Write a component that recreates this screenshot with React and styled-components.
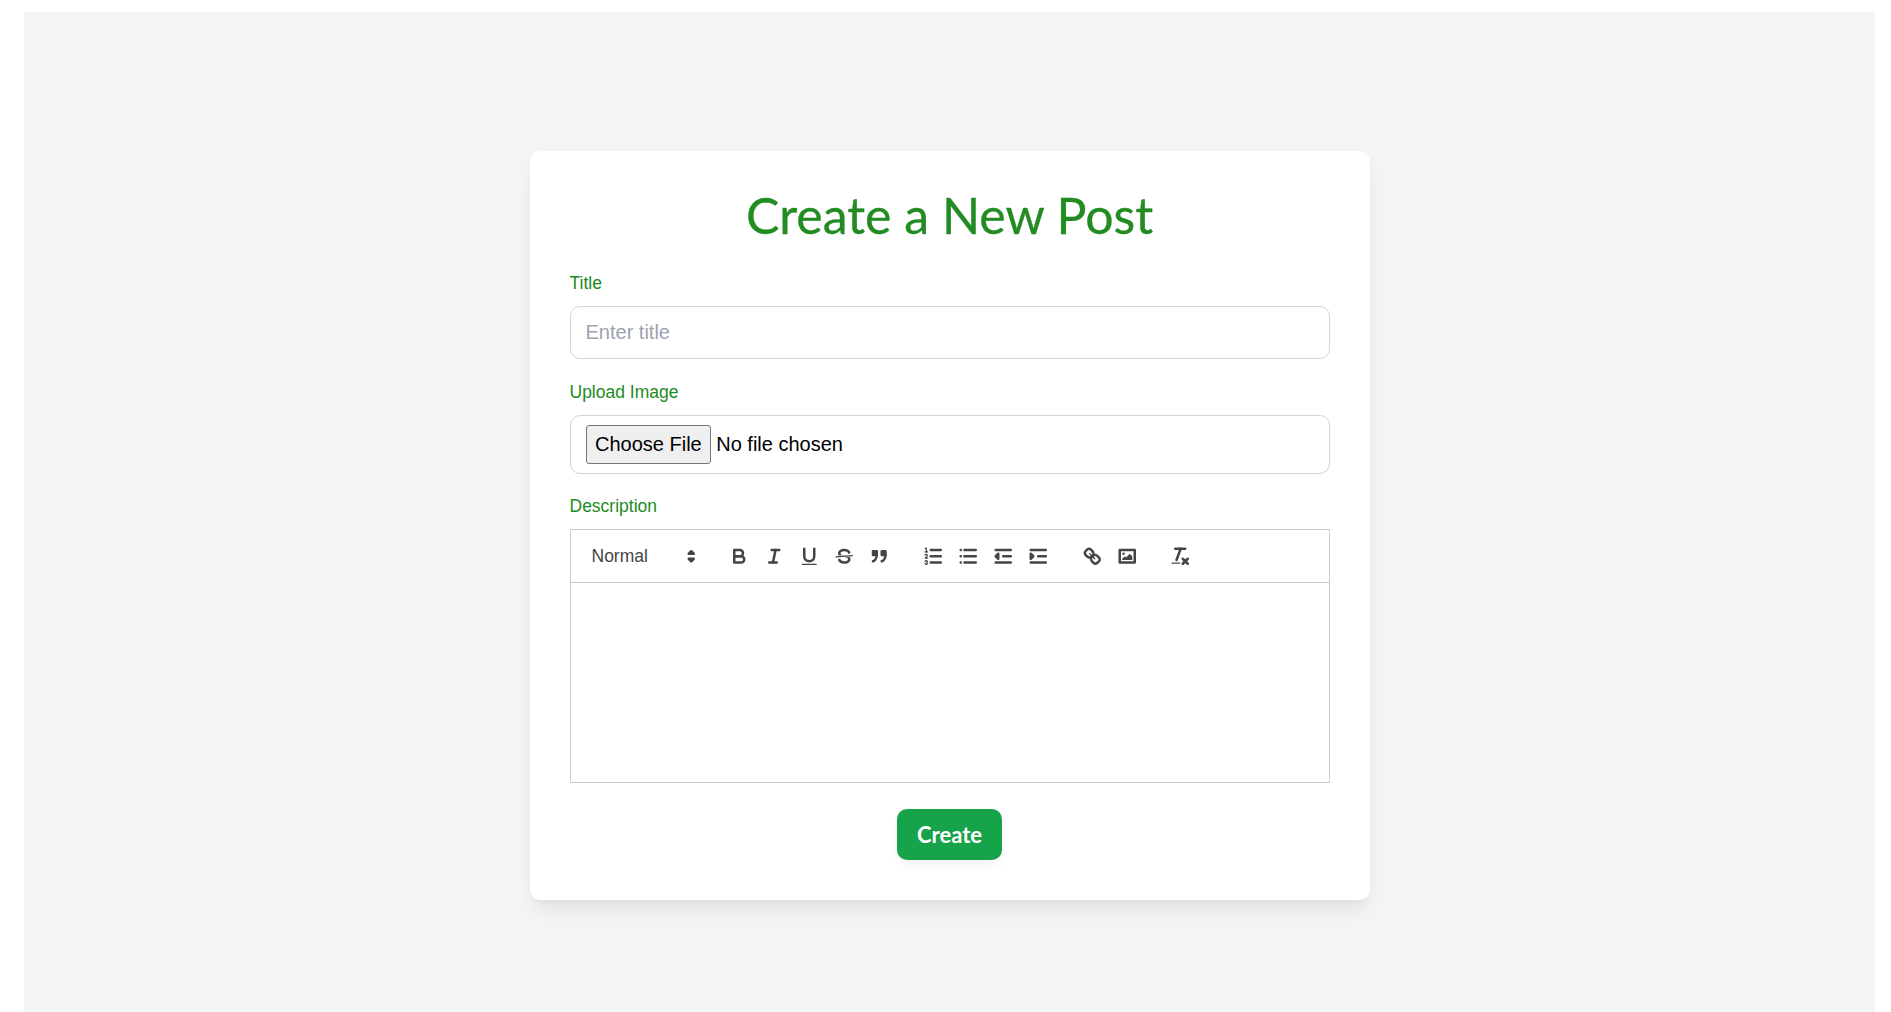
import React from 'react';
import styled, { createGlobalStyle } from 'styled-components';

const GlobalStyle = createGlobalStyle`
  html, body {
    margin: 0;
    background: #fff;
  }
  body {
    font-family: 'Liberation Sans', Arial, sans-serif;
  }
`;

const Page = styled.main`
  margin: 12px 16px 0 24px;
  min-height: 1000px;
  padding-top: 139px;
  box-sizing: border-box;
  background: #f3f4f6;
  display: flex;
  justify-content: center;
  align-items: flex-start;
`;

const Card = styled.form`
  width: 840px;
  box-sizing: border-box;
  padding: 40px;
  background: #fff;
  border-radius: 10px;
  box-shadow: 0 12px 19px -4px rgba(0, 0, 0, 0.08), 0 5px 8px -5px rgba(0, 0, 0, 0.06);
`;

const Heading = styled.h1`
  margin: 0 0 32px;
  text-align: center;
  font-family: Lato, sans-serif;
  font-size: 50px;
  line-height: 48px;
  font-weight: 400;
  color: #228b22;
  -webkit-text-stroke: 0.3px #228b22;
`;

const Field = styled.div`
  margin-bottom: 20.5px;
`;

const Label = styled.label`
  display: block;
  margin-bottom: 10px;
  font-size: 17.5px;
  line-height: 25px;
  color: #228b22;
`;

const TextInput = styled.input`
  display: block;
  width: 100%;
  height: 53px;
  box-sizing: border-box;
  padding: 0 15px;
  border: 1px solid #d1d5db;
  border-radius: 10px;
  outline: none;
  font-family: 'Liberation Sans', Arial, sans-serif;
  font-size: 20px;
  color: #111;

  &::placeholder {
    color: #9ca3af;
    opacity: 1;
  }
`;

const FileInput = styled(TextInput)`
  height: 59px;
  padding: 9px 15px;
  color: #000;

  &::file-selector-button {
    height: 39px;
    margin-right: 5px;
    padding: 0 8.5px;
    font: inherit;
    color: #000;
    background: #efefef;
    border: 1px solid #767676;
    border-radius: 3px;
  }
`;

const Editor = styled.div`
  border: 1px solid #ccc;
`;

const Toolbar = styled.div`
  display: flex;
  align-items: center;
  height: 53px;
  box-sizing: border-box;
  padding: 0 10px;
  border-bottom: 1px solid #ccc;
`;

const ToolGroup = styled.div`
  display: flex;
  margin-right: ${props => props.$gap || 18.75}px;
`;

const Picker = styled.div`
  display: flex;
  align-items: center;
  justify-content: space-between;
  width: 121.5px;
  height: 30px;
  padding-left: 11px;
  box-sizing: border-box;
  font-size: 17.5px;
  color: #444;
`;

const ToolButton = styled.button`
  width: 35px;
  height: 30px;
  padding: 4px 6px;
  border: none;
  background: none;
  display: flex;
  align-items: center;
  justify-content: center;
`;

const Glyph = styled.svg.attrs({ viewBox: '0 0 18 18' })`
  width: 22.5px;
  height: 22.5px;
  flex: none;

  .s {
    fill: none;
    stroke: #444;
    stroke-width: 2;
    stroke-linecap: round;
    stroke-linejoin: round;
  }
  .t {
    fill: none;
    stroke: #444;
    stroke-width: 1;
    stroke-linecap: round;
    stroke-linejoin: round;
  }
  .f {
    fill: #444;
  }
  .sf {
    fill: #444;
    stroke: #444;
    stroke-width: 2;
    stroke-linecap: round;
    stroke-linejoin: round;
  }
`;

const EditorBody = styled.div`
  height: 199px;
`;

const Actions = styled.div`
  display: flex;
  justify-content: center;
  margin-top: 26px;
`;

const SubmitButton = styled.button`
  width: 105px;
  height: 51px;
  border: none;
  border-radius: 10px;
  background: #16a34a;
  color: #fff;
  font-family: Lato, sans-serif;
  font-size: 22px;
  font-weight: 700;
  box-shadow: 0 6px 12px -2px rgba(0, 0, 0, 0.06);
`;

const icons = {
  bold: (
    <>
      <path className="s" d="M5,4H9.5A2.5,2.5,0,0,1,12,6.5v0A2.5,2.5,0,0,1,9.5,9H5A0,0,0,0,1,5,9V4A0,0,0,0,1,5,4Z" />
      <path className="s" d="M5,9h5.5A2.5,2.5,0,0,1,13,11.5v0A2.5,2.5,0,0,1,10.5,14H5a0,0,0,0,1,0,0V9A0,0,0,0,1,5,9Z" />
    </>
  ),
  italic: (
    <>
      <line className="s" x1="7" x2="13" y1="4" y2="4" />
      <line className="s" x1="5" x2="11" y1="14" y2="14" />
      <line className="s" x1="8" x2="10" y1="14" y2="4" />
    </>
  ),
  underline: (
    <>
      <path className="s" d="M5,3V9a4.012,4.012,0,0,0,4,4H9a4.012,4.012,0,0,0,4-4V3" />
      <rect className="f" height="1" rx="0.5" ry="0.5" width="12" x="3" y="15" />
    </>
  ),
  strike: (
    <>
      <line className="t" x1="15.5" x2="2.5" y1="8.5" y2="9.5" />
      <path className="f" d="M9.007,8C6.542,7.791,6,7.519,6,6.5,6,5.792,7.283,5,9,5c1.571,0,2.765.679,2.969,1.309a1,1,0,0,0,1.9-.617C13.356,4.106,11.354,3,9,3,6.2,3,4,4.538,4,6.5a3.2,3.2,0,0,0,.5,1.843Z" />
      <path className="f" d="M8.984,10C11.457,10.208,12,10.479,12,11.5c0,.708-1.283,1.5-3,1.5-1.571,0-2.765-.679-2.969-1.309a1,1,0,1,0-1.9.617C4.644,13.894,6.646,15,9,15c2.8,0,5-1.538,5-3.5a3.2,3.2,0,0,0-.5-1.843Z" />
    </>
  ),
  quote: (
    <>
      <rect className="sf" height="3" width="3" x="4" y="5" />
      <rect className="sf" height="3" width="3" x="11" y="5" />
      <path className="s" d="M7,8c0,4.031-3,5-3,5" />
      <path className="s" d="M14,8c0,4.031-3,5-3,5" />
    </>
  ),
  ordered: (
    <>
      <line className="s" x1="7" x2="15" y1="4" y2="4" />
      <line className="s" x1="7" x2="15" y1="9" y2="9" />
      <line className="s" x1="7" x2="15" y1="14" y2="14" />
      <line className="t" x1="2.5" x2="4.5" y1="5.5" y2="5.5" />
      <path className="f" d="M3.5,6A0.5,0.5,0,0,1,3,5.5V3.085l-0.276.138A0.5,0.5,0,0,1,2.053,3c-0.124-.247-0.023-0.324.224-0.447l1-.5A0.5,0.5,0,0,1,4,2.5v3A0.5,0.5,0,0,1,3.5,6Z" />
      <path className="t" d="M4.5,10.5h-2c0-.234,1.85-1.076,1.85-2.234A0.959,0.959,0,0,0,2.5,8.156" />
      <path className="t" d="M2.5,14.846a0.959,0.959,0,0,0,1.85-.109A0.7,0.7,0,0,0,3.75,14a0.688,0.688,0,0,0,.6-0.736,0.959,0.959,0,0,0-1.85-.109" />
    </>
  ),
  bullet: (
    <>
      <line className="s" x1="6" x2="15" y1="4" y2="4" />
      <line className="s" x1="6" x2="15" y1="9" y2="9" />
      <line className="s" x1="6" x2="15" y1="14" y2="14" />
      <line className="s" x1="3" x2="3" y1="4" y2="4" />
      <line className="s" x1="3" x2="3" y1="9" y2="9" />
      <line className="s" x1="3" x2="3" y1="14" y2="14" />
    </>
  ),
  outdent: (
    <>
      <line className="s" x1="3" x2="15" y1="14" y2="14" />
      <line className="s" x1="3" x2="15" y1="4" y2="4" />
      <line className="s" x1="9" x2="15" y1="9" y2="9" />
      <polygon className="sf" points="5 7 5 11 3 9 5 7" />
    </>
  ),
  indent: (
    <>
      <line className="s" x1="3" x2="15" y1="14" y2="14" />
      <line className="s" x1="3" x2="15" y1="4" y2="4" />
      <line className="s" x1="9" x2="15" y1="9" y2="9" />
      <polygon className="sf" points="3 7 3 11 5 9 3 7" />
    </>
  ),
  link: (
    <>
      <line className="t" x1="7" x2="11" y1="7" y2="11" />
      <path className="s" d="M8.9,4.577a3.476,3.476,0,0,1,.36,4.679A3.476,3.476,0,0,1,4.577,8.9C3.185,7.5,2.035,6.4,4.217,4.217S7.5,3.185,8.9,4.577Z" />
      <path className="s" d="M13.423,9.1a3.476,3.476,0,0,0-4.679-.36,3.476,3.476,0,0,0,.36,4.679c1.392,1.392,2.5,2.542,4.679.36S14.815,10.5,13.423,9.1Z" />
    </>
  ),
  image: (
    <>
      <rect className="s" height="10" width="12" x="3" y="4" />
      <circle className="f" cx="6" cy="7" r="1" />
      <polygon className="f" points="5 12 5 11 7 9 8 10 11 7 13 9 13 12 5 12" />
    </>
  ),
  clean: (
    <>
      <line className="s" x1="5" x2="13" y1="3" y2="3" />
      <line className="s" x1="6" x2="9.35" y1="12" y2="3" />
      <line className="s" x1="11" x2="15" y1="11" y2="15" />
      <line className="s" x1="15" x2="11" y1="11" y2="15" />
      <rect className="f" height="1" rx="0.5" ry="0.5" width="7" x="2" y="14" />
    </>
  ),
};

const toolGroups = [
  ['bold', 'italic', 'underline', 'strike', 'quote'],
  ['ordered', 'bullet', 'outdent', 'indent'],
  ['link', 'image'],
  ['clean'],
];

export default function App() {
  return (
    <Page>
      <GlobalStyle />
      <Card onSubmit={e => e.preventDefault()}>
        <Heading>Create a New Post</Heading>

        <Field>
          <Label htmlFor="title">Title</Label>
          <TextInput id="title" type="text" placeholder="Enter title" />
        </Field>

        <Field>
          <Label htmlFor="image">Upload Image</Label>
          <FileInput id="image" type="file" />
        </Field>

        <Label>Description</Label>
        <Editor>
          <Toolbar>
            <ToolGroup $gap={19.75}>
              <Picker>
                Normal
                <Glyph>
                  <polygon className="s" points="7 11 9 13 11 11 7 11" />
                  <polygon className="s" points="7 7 9 5 11 7 7 7" />
                </Glyph>
              </Picker>
            </ToolGroup>
            {toolGroups.map(group => (
              <ToolGroup key={group[0]}>
                {group.map(name => (
                  <ToolButton type="button" key={name} aria-label={name}>
                    <Glyph>{icons[name]}</Glyph>
                  </ToolButton>
                ))}
              </ToolGroup>
            ))}
          </Toolbar>
          <EditorBody />
        </Editor>

        <Actions>
          <SubmitButton type="submit">Create</SubmitButton>
        </Actions>
      </Card>
    </Page>
  );
}
